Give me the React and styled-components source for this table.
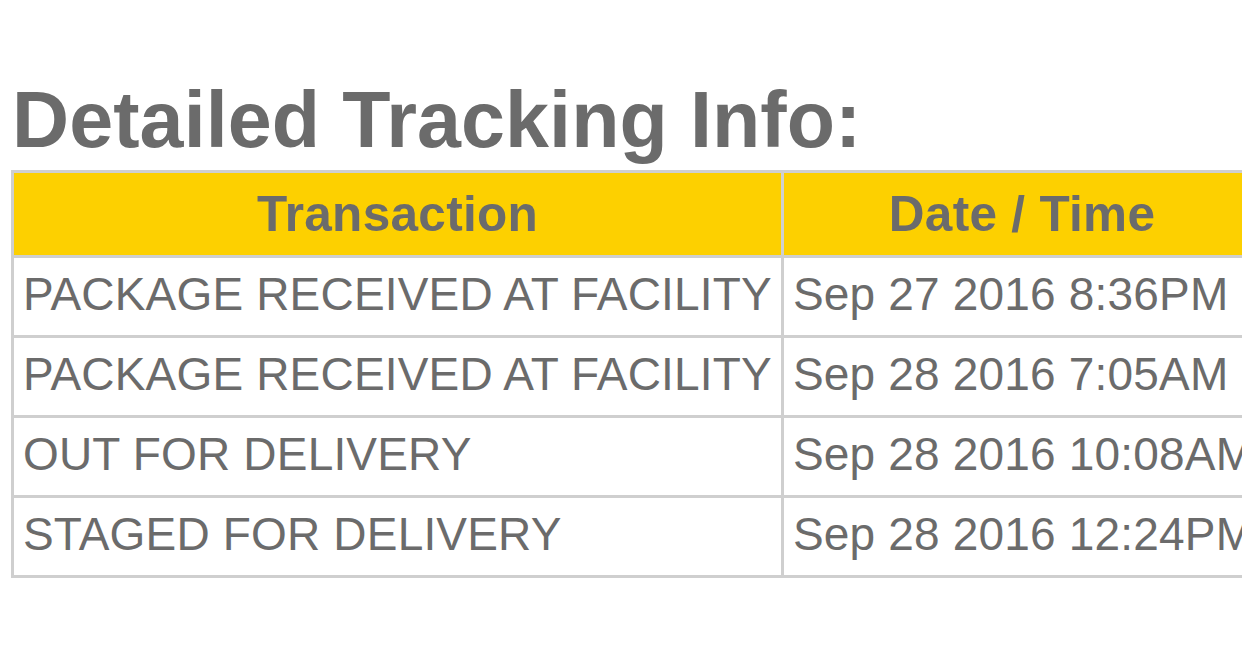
import styled, { createGlobalStyle } from "styled-components";

const GlobalStyle = createGlobalStyle`
  html, body {
    margin: 0;
    padding: 0;
    background: #ffffff;
    overflow: hidden;
  }
  body {
    font-family: "Liberation Sans", Arial, sans-serif;
    color: #6b6b6b;
  }
`;

const Page = styled.div`
  width: 1242px;
  height: 655px;
  overflow: hidden;
  padding-left: 11px;
  box-sizing: border-box;
`;

const Heading = styled.h1`
  margin: 74px 0 5px 1px;
  font-size: 79px;
  line-height: 91px;
  font-weight: 700;
  letter-spacing: 0.1px;
  color: #6b6b6b;
  white-space: nowrap;
`;

const Table = styled.table`
  border-spacing: 0;
  table-layout: fixed;
  width: 1252px;
  border-top: 3px solid #cfcfcf;
  border-left: 3px solid #cfcfcf;
`;

const Th = styled.th`
  box-sizing: border-box;
  width: ${(p) => p.$w}px;
  background: #fdd000;
  color: #6b6b6b;
  font-size: 49.5px;
  line-height: 56px;
  font-weight: 700;
  letter-spacing: 0.3px;
  text-align: center;
  padding: 12.5px 7px 13.5px;
  border-right: 3px solid #cfcfcf;
  border-bottom: 3px solid #cfcfcf;
  white-space: nowrap;
`;

const Td = styled.td`
  color: #6b6b6b;
  font-size: 46px;
  line-height: 52px;
  letter-spacing: 0.18px;
  text-align: left;
  padding: 10px 6px 15px 9px;
  border-right: 3px solid #cfcfcf;
  border-bottom: 3px solid #cfcfcf;
  white-space: nowrap;
  overflow: hidden;
`;

const events = [
  { what: "PACKAGE RECEIVED AT FACILITY", when: "Sep 27 2016 8:36PM" },
  { what: "PACKAGE RECEIVED AT FACILITY", when: "Sep 28 2016 7:05AM" },
  { what: "OUT FOR DELIVERY", when: "Sep 28 2016 10:08AM" },
  { what: "STAGED FOR DELIVERY", when: "Sep 28 2016 12:24PM" },
];

export default function App() {
  return (
    <Page>
      <GlobalStyle />
      <Heading>Detailed Tracking Info:</Heading>
      <Table>
        <thead>
          <tr>
            <Th $w={770}>Transaction</Th>
            <Th $w={479}>Date / Time</Th>
          </tr>
        </thead>
        <tbody>
          {events.map((e, i) => (
            <tr key={i}>
              <Td>{e.what}</Td>
              <Td>{e.when}</Td>
            </tr>
          ))}
        </tbody>
      </Table>
    </Page>
  );
}
